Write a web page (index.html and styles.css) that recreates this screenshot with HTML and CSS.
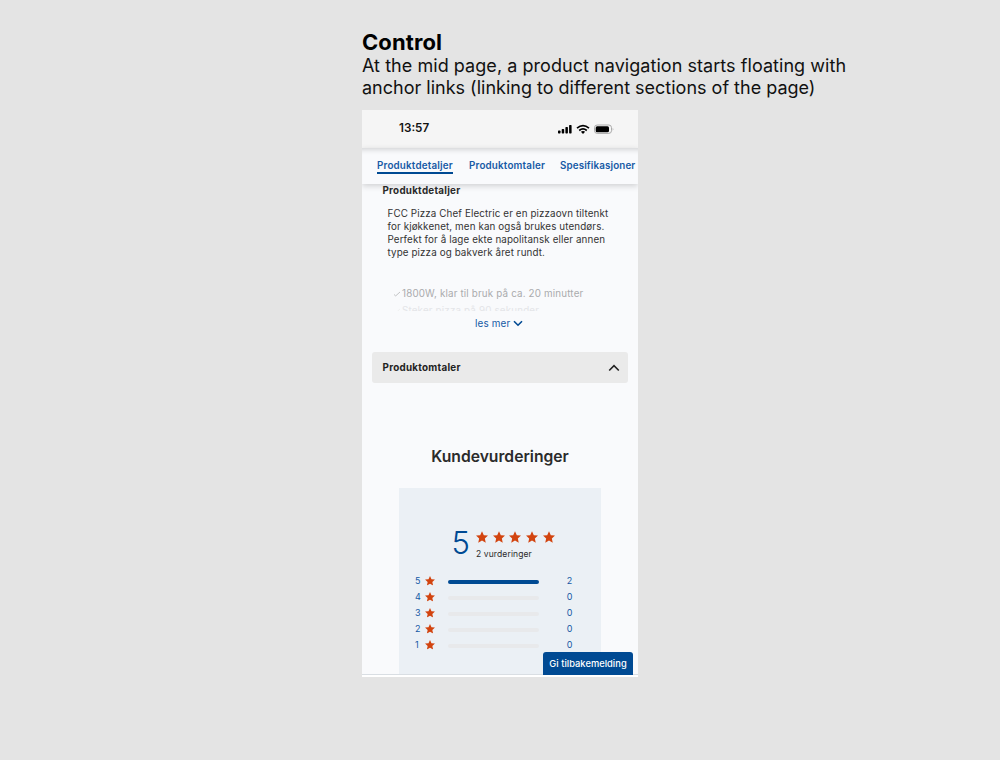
FILE: index.html
```html
<!DOCTYPE html>
<html lang="no">
<head>
<meta charset="utf-8">
<title>Control</title>
<link rel="stylesheet" href="styles.css">
</head>
<body>
<svg class="defs" width="0" height="0" aria-hidden="true">
  <symbol id="star" viewBox="0 0 24 23"><path d="M12 0l3.600 7.800 8.400.9-6.300 5.700 1.800 8.600L12 18.700 4.500 23l1.800-8.600L0 8.700l8.400-.9z"/></symbol>
</svg>
<main class="board">
  <h1 class="title">Control</h1>
  <p class="caption"><span class="line1">At the mid page, a product navigation starts floating with</span><br>anchor links (linking to different sections of the page)</p>
  <section class="phone">
    <div class="status">
      <span class="time">13:57</span>
      <svg class="status-icons" viewBox="0 0 58 12" width="58" height="12">
        <rect x="1" y="7.500" width="2.500" height="3" rx=".7"/>
        <rect x="4.700" y="6" width="2.500" height="4.500" rx=".7"/>
        <rect x="8.400" y="4" width="2.500" height="6.500" rx=".7"/>
        <rect x="12.100" y="2" width="2.500" height="8.500" rx=".7"/>
        <g fill="none" stroke="#000" stroke-width="1.700"><path d="M20 5.100q6-5 12 0M22.200 7.500q3.800-3.100 7.600 0"/></g>
        <path d="M23.900 8.800q2.100-1.500 4.200 0l-2.100 2.100z"/>
        <rect x="37.500" y="2" width="17" height="8.400" rx="2.700" fill="none" stroke="#aaa" stroke-width="1"/>
        <rect x="38.700" y="3.200" width="13.300" height="6" rx="1.500"/>
        <path d="M55.700 4.700q1.600 1.500 0 3z" fill="#aaa"/>
      </svg>
    </div>
    <nav class="tabs">
      <a class="tab active">Produktdetaljer</a>
      <a class="tab second">Produktomtaler</a>
      <a class="tab third">Spesifikasjoner</a>
    </nav>
    <div class="content">
      <h2 class="section-title">Produktdetaljer</h2>
      <p class="details">FCC Pizza Chef Electric er en pizzaovn tiltenkt<br>for kjøkkenet, men kan også brukes utendørs.<br>Perfekt for å lage ekte napolitansk eller annen<br>type pizza og bakverk året rundt.</p>
      <ul class="features">
        <li><svg width="8" height="8" viewBox="0 0 8 8"><path d="M1 4.500l1.700 1.400L7 2"/></svg><span>1800W, klar til bruk på ca. 20 minutter</span></li>
        <li class="fading"><svg width="8" height="8" viewBox="0 0 8 8"><path d="M1 4.500l1.700 1.400L7 2"/></svg><span>Steker pizza på 90 sekunder</span></li>
      </ul>
      <a class="more"><span>les mer</span><svg width="10" height="7" viewBox="0 0 10 7"><path d="M1 1.200l4 4 4-4"/></svg></a>
      <div class="accordion"><span>Produktomtaler</span><svg width="12" height="8" viewBox="0 0 12 8"><path d="M1.200 6.500L6 1.700l4.800 4.800"/></svg></div>
      <h2 class="reviews-title">Kundevurderinger</h2>
      <div class="reviews">
        <div class="summary">
          <span class="score">5</span>
          <div>
            <div class="stars"><svg><use href="#star"/></svg><svg><use href="#star"/></svg><svg><use href="#star"/></svg><svg><use href="#star"/></svg><svg><use href="#star"/></svg></div>
            <span class="count">2 vurderinger</span>
          </div>
        </div>
        <div class="row"><span>5</span><svg><use href="#star"/></svg><i class="bar full"></i><b>2</b></div>
        <div class="row"><span>4</span><svg><use href="#star"/></svg><i class="bar"></i><b>0</b></div>
        <div class="row"><span>3</span><svg><use href="#star"/></svg><i class="bar"></i><b>0</b></div>
        <div class="row"><span>2</span><svg><use href="#star"/></svg><i class="bar"></i><b>0</b></div>
        <div class="row"><span>1</span><svg><use href="#star"/></svg><i class="bar"></i><b>0</b></div>
      </div>
    </div>
    <button class="feedback">Gi tilbakemelding</button>
  </section>
</main>
</body>
</html>
```
FILE: styles.css
```css
* { box-sizing: border-box; margin: 0; padding: 0; }
body { width: 1000px; height: 760px; overflow: hidden; background: #e4e4e4; font-family: Inter, "Liberation Sans", sans-serif; color: #2b2b2b; }
.defs { display: block; }
.board { width: 520px; margin-left: 362px; padding-top: 30px; }
.title { font-size: 22px; line-height: 25px; color: #000; font-weight: 700; letter-spacing: .1px; }
.caption { font-size: 18px; line-height: 22px; color: #111; white-space: nowrap; }
.line1 { letter-spacing: .05px; }
.phone { position: relative; width: 276px; height: 567px; margin-top: 11px; background: #f9fafc; overflow: hidden; border-bottom: 2px solid #fff; box-shadow: inset 0 -1px #d9dee3; }
.status { height: 38px; background: #f5f5f5; display: flex; align-items: center; padding-left: 37px; }
.time { font-size: 11.700px; font-weight: 600; color: #111; width: 158px; line-height: 14px; margin-top: -2px; }
.status-icons { display: block; margin-top: -1px; }
.tabs { position: relative; height: 36px; background: #f9fafc; display: flex; padding: 11px 0 0 15px; box-shadow: 0 2px 6px rgba(0,0,0,.17), inset 0 6px 5px -4px rgba(0,0,0,.15); white-space: nowrap; }
.tab { font-size: 9.800px; letter-spacing: .2px; line-height: 13px; height: 15px; font-weight: 600; color: #1659a5; width: 76px; margin-right: 16px; flex: none; }
.tab.active { border-bottom: 2px solid #004a93; }
.second { margin-right: 15px; }
.third { letter-spacing: .13px; }
.content { height: 490px; overflow: hidden; }
.section-title { font-size: 9.800px; letter-spacing: .26px; line-height: 13px; padding-left: 20.500px; font-weight: 700; }
.details { padding: 10px 0 0 25.500px; font-size: 9.800px; letter-spacing: .12px; line-height: 13px; color: #333; white-space: nowrap; }
.features { list-style: none; height: 25px; margin-top: 27px; padding-left: 31px; overflow: hidden; color: #aaabad; font-size: 9.800px; letter-spacing: .17px; }
.features li { height: 17px; line-height: 13px; display: flex; align-items: center; gap: 1px; white-space: nowrap; padding-bottom: 2px; }
.features path { fill: none; stroke: #b5b6b8; stroke-width: .8; }
.features .fading { color: #e4e5e8; }
.features .fading path { stroke: #eee; }
.more { display: flex; align-items: center; gap: 3px; margin-left: 113px; margin-top: 5px; height: 14px; font-size: 9.900px; letter-spacing: .15px; color: #1659a5; }
.more path, .accordion path { fill: none; stroke: #004a93; stroke-width: 1.600; }
.accordion path { stroke: #222; }
.accordion { height: 31px; margin: 22px 10px 0; border-radius: 3px; background: #eaeaea; display: flex; align-items: center; justify-content: space-between; padding: 0 8px 0 10.500px; font-size: 9.800px; letter-spacing: .28px; font-weight: 700; color: #222; }
.reviews-title { font-size: 15.700px; line-height: 22px; margin-top: 63px; text-align: center; font-weight: 600; }
.reviews { width: 202px; height: 200px; margin: 20px 0 0 37px; background: #ebf0f5; padding: 38px 0 0 16px; }
.summary { display: flex; height: 47px; padding-left: 36.500px; }
.score { font-size: 31px; line-height: 34px; width: 24.500px; font-weight: 300; color: #004a93; }
.stars { display: flex; gap: 4.700px; margin-top: 5px; height: 13px; }
.stars svg { width: 12px; height: 12px; }
svg use { fill: #d2440f; }
.count { display: block; font-size: 8.500px; letter-spacing: .12px; line-height: 12px; margin-top: 4px; white-space: nowrap; }
.row { display: flex; align-items: center; height: 16px; font-size: 9px; color: #1659a5; }
.row span { width: 10px; line-height: 16px; }
.row svg { width: 10px; height: 9.500px; }
.bar { width: 91px; height: 4px; border-radius: 2px; background: #e8e9eb; margin: 2px 26.500px 0 13px; }
.bar.full { background: #004a93; }
.row b { font-weight: 400; width: 8px; line-height: 16px; margin-top: -1px; text-align: center; }
.feedback { position: absolute; left: 181px; top: 542px; width: 90px; height: 23px; border: 0; border-radius: 3px 3px 0 0; background: #004a93; color: #fff; font: 500 9.300px Inter, sans-serif; letter-spacing: .04px; white-space: nowrap; }
```
